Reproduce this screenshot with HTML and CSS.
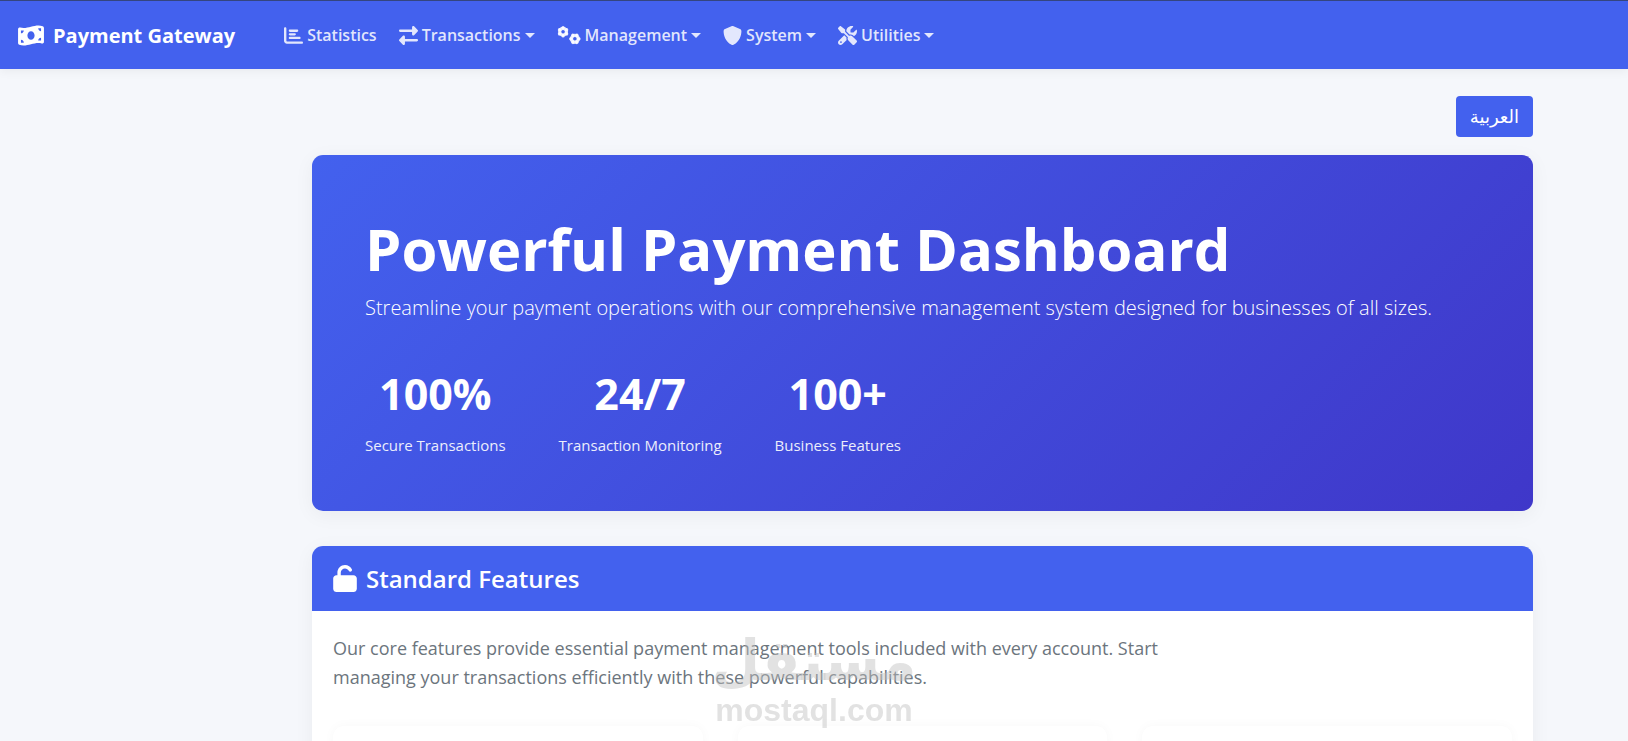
FILE: index.html
```html
<!DOCTYPE html>
<html lang="en">
<head>
    <meta charset="UTF-8">
    <meta name="viewport" content="width=device-width, initial-scale=1.0">
    <title>Payment Gateway</title>
    <link rel="stylesheet" href="styles.css">
</head>
<body>

<nav class="navbar">
    <a class="brand" href="#">
        <svg class="icon brand-icon" viewBox="0 0 576 512"><path fill-rule="evenodd" d="M0 112.500V422.300c0 18 10.100 35 27 41.300c87 32.500 174 10.300 261-11.900c79.800-20.300 159.600-40.700 239.300-18.900c23 6.300 48.700-9.500 48.700-33.400V89.700c0-18-10.100-35-27-41.300C462 15.900 375 38.100 288 60.300C208.200 80.600 128.400 100.900 48.700 79.100C25.600 72.800 0 88.600 0 112.500zM288 352c-44.200 0-80-43-80-96s35.800-96 80-96s80 43 80 96s-35.800 96-80 96zM64 352c35.300 0 64 28.700 64 64H64V352zm64-208c0 35.300-28.700 64-64 64V144h64zM512 304v64H448c0-35.300 28.700-64 64-64zM448 96h64v64c-35.300 0-64-28.700-64-64z"/></svg>
        Payment Gateway
    </a>
    <ul class="nav-list">
        <li>
            <a class="nav-link" href="#">
                <svg class="icon" viewBox="0 0 512 512"><path d="M32 32c17.700 0 32 14.300 32 32V400c0 8.800 7.200 16 16 16H480c17.700 0 32 14.300 32 32s-14.300 32-32 32H80c-44.200 0-80-35.800-80-80V64C0 46.300 14.300 32 32 32zm96 96c0-17.700 14.300-32 32-32l192 0c17.700 0 32 14.300 32 32s-14.300 32-32 32l-192 0c-17.700 0-32-14.300-32-32zm32 64H288c17.700 0 32 14.300 32 32s-14.300 32-32 32H160c-17.700 0-32-14.300-32-32s14.300-32 32-32zm0 96H416c17.700 0 32 14.300 32 32s-14.300 32-32 32H160c-17.700 0-32-14.300-32-32s14.300-32 32-32z"/></svg>
                Statistics
            </a>
        </li>
        <li>
            <a class="nav-link dropdown" href="#">
                <svg class="icon" viewBox="0 0 512 512"><path d="M32 96l320 0V32c0-12.900 7.800-24.600 19.800-29.600s25.700-2.200 34.900 6.900l96 96c6 6 9.400 14.100 9.400 22.600s-3.400 16.600-9.400 22.600l-96 96c-9.200 9.200-22.900 11.900-34.900 6.900s-19.800-16.600-19.800-29.600V160L32 160c-17.700 0-32-14.300-32-32s14.300-32 32-32zM480 352c17.700 0 32 14.300 32 32s-14.300 32-32 32H160v64c0 12.900-7.800 24.600-19.800 29.600s-25.700 2.200-34.900-6.900l-96-96c-6-6-9.400-14.100-9.400-22.600s3.400-16.600 9.400-22.600l96-96c9.200-9.200 22.900-11.900 34.900-6.900s19.800 16.600 19.800 29.600l0 64H480z"/></svg>
                Transactions
            </a>
        </li>
        <li>
            <a class="nav-link dropdown" href="#">
                <svg class="icon icon-wide" viewBox="0 0 640 512">
                    <g fill="none" stroke="currentColor">
                        <circle cx="160" cy="156" r="92" stroke-width="88"/>
                        <path stroke-width="84" stroke-linecap="round" d="M160 60V42M160 252V270M77 108L61 99M243 204L259 213M77 204L61 213M243 108L259 99"/>
                        <circle cx="478" cy="346" r="92" stroke-width="88"/>
                        <path stroke-width="84" stroke-linecap="round" d="M382 346H364M574 346H592M430 263L421 247M526 429L535 445M526 263L535 247M430 429L421 445"/>
                    </g>
                </svg>
                Management
            </a>
        </li>
        <li>
            <a class="nav-link dropdown" href="#">
                <svg class="icon" viewBox="0 0 512 512"><path d="M269.400 2.900C265.200 1 260.700 0 256 0s-9.200 1-13.400 2.900L54.300 82.800c-22 9.300-38.400 31-38.300 57.200c.5 99.200 41.300 280.700 213.600 363.200c16.700 8 36.100 8 52.800 0C454.700 420.700 495.500 239.200 496 140c.1-26.200-16.300-47.900-38.300-57.200L269.400 2.900z"/></svg>
                System
            </a>
        </li>
        <li>
            <a class="nav-link dropdown" href="#">
                <svg class="icon" viewBox="0 0 512 512"><path d="M78.600 5C69.100-2.400 55.600-1.500 47 7L7 47c-8.500 8.500-9.400 22-2.100 31.600l80 104c4.500 5.900 11.600 9.400 19 9.400h54.100l109 109c-14.700 29-10 65.400 14.300 89.600l112 112c12.500 12.500 32.800 12.500 45.300 0l64-64c12.500-12.500 12.500-32.800 0-45.300l-112-112c-24.200-24.200-60.600-29-89.600-14.300l-109-109V104c0-7.500-3.500-14.500-9.400-19L78.600 5zM19.900 396.100C7.200 408.800 0 426.100 0 444.100C0 481.600 30.400 512 67.900 512c18 0 35.300-7.200 48-19.900L233.700 374.300c-7.800-20.900-9-43.600-3.600-65.100l-61.700-61.700L19.900 396.100zM512 144c0-10.500-1.100-20.700-3.200-30.500c-2.400-11.200-16.100-14.100-24.200-6l-63.900 63.900c-3 3-7.100 4.700-11.300 4.700H352c-8.800 0-16-7.200-16-16V102.600c0-4.200 1.700-8.300 4.700-11.300l63.900-63.900c8.100-8.100 5.200-21.800-6-24.200C388.700 1.100 378.500 0 368 0C288.500 0 224 64.500 224 144l0 .8 85.300 85.300c36-9.100 75.800 .5 104 28.700L429 274.500c49-23 83-72.800 83-130.500zM56 432a24 24 0 1 1 48 0 24 24 0 1 1 -48 0z"/></svg>
                Utilities
            </a>
        </li>
    </ul>
</nav>

<main class="content">

<div class="language">
    <button class="language-btn" type="button" lang="ar">العربية</button>
</div>

<section class="hero">
    <h1>Powerful Payment Dashboard</h1>
    <p class="lead">Streamline your payment operations with our comprehensive management system designed for businesses of all sizes.</p>
    <div class="stats">
        <div class="stat">
            <div class="stat-value">100%</div>
            <div class="stat-label">Secure Transactions</div>
        </div>
        <div class="stat">
            <div class="stat-value">24/7</div>
            <div class="stat-label">Transaction Monitoring</div>
        </div>
        <div class="stat">
            <div class="stat-value">100+</div>
            <div class="stat-label">Business Features</div>
        </div>
    </div>
</section>

<section class="features">
    <h2 class="features-header">
        <svg class="icon lock-icon" viewBox="0 0 448 512"><path d="M144 144c0-44.200 35.800-80 80-80c31.900 0 59.400 18.600 72.300 45.700c7.600 16 26.700 22.800 42.600 15.200s22.800-26.700 15.200-42.600C331 33.700 281.500 0 224 0C144.500 0 80 64.500 80 144v48H64c-35.300 0-64 28.700-64 64V448c0 35.300 28.700 64 64 64H384c35.300 0 64-28.700 64-64V256c0-35.300-28.700-64-64-64H144V144z"/></svg>
        Standard Features
    </h2>
    <div class="features-body">
        <p class="features-text">Our core features provide essential payment management tools included with every account. Start managing your transactions efficiently with these powerful capabilities.</p>
        <div class="feature-grid">
            <div class="feature-card"></div>
            <div class="feature-card"></div>
            <div class="feature-card"></div>
        </div>
    </div>
</section>

</main>

<div class="watermark">
    <span class="watermark-ar" lang="ar">مستقل</span>
    <span class="watermark-en">mostaql.com</span>
</div>

</body>
</html>
```
FILE: styles.css
```css
*{
    box-sizing: border-box;
}

body{
    margin: 0;
    height: 100vh;
    overflow: hidden;
    background-color: #f5f7fb;
    font-family: "Open Sans", "Noto Sans", "DejaVu Sans", sans-serif;
}

.navbar{
    display: flex;
    align-items: center;
    gap: 49px;
    height: 69px;
    padding: 0 18px;
    border-top: 1px solid #34457f;
    background-color: #4361ee;
    box-shadow: 0 2px 10px rgba(0, 0, 0, 0.06);
}

.icon{
    flex: none;
    width: 19px;
    height: 19px;
    fill: currentColor;
}

.brand{
    display: flex;
    align-items: center;
    gap: 9px;
    color: white;
    font-size: 20px;
    font-weight: 700;
    text-decoration: none;
}

.brand-icon{
    width: 26px;
    height: 23px;
}

.nav-list{
    display: flex;
    gap: 22px;
    margin: 0;
    padding: 0;
    list-style: none;
}

.nav-link{
    display: flex;
    align-items: center;
    gap: 4px;
    color: rgba(255, 255, 255, 0.85);
    font-size: 16px;
    font-weight: 600;
    text-decoration: none;
}

.icon-wide{
    width: 24px;
}

.dropdown::after{
    content: '';
    border-top: 5px solid;
    border-left: 5px solid transparent;
    border-right: 5px solid transparent;
}

.content{
    padding: 27px 95px 0 312px;
}

.language{
    display: flex;
    justify-content: flex-end;
    margin-bottom: 18px;
}

.language-btn{
    height: 41px;
    padding: 0 14px;
    border: none;
    border-radius: 4px;
    background-color: #4361ee;
    color: white;
    font-family: "DejaVu Sans", sans-serif;
    font-size: 18px;
}

.hero{
    padding: 53px;
    border-radius: 11px;
    background-image: linear-gradient(135deg, #4361ee, #3f37c9);
    box-shadow: 0 4px 20px rgba(0, 0, 0, 0.05);
    color: white;
}

.hero h1{
    margin: 0;
    font-size: 58px;
    font-weight: 700;
    line-height: 82px;
}

.lead{
    margin: 0 0 38px;
    font-size: 20px;
    font-weight: 300;
    line-height: 36px;
}

.stats{
    display: flex;
    gap: 53px;
}

.stat{
    text-align: center;
}

.stat-value{
    font-size: 43px;
    font-weight: 700;
    line-height: 60px;
}

.stat-label{
    margin-top: 9px;
    font-size: 15px;
    line-height: 25px;
    opacity: 0.9;
}

.features{
    margin-top: 35px;
    border-radius: 11px;
    overflow: hidden;
    background-color: white;
    box-shadow: 0 4px 20px rgba(0, 0, 0, 0.05);
}

.features-header{
    display: flex;
    align-items: center;
    gap: 9px;
    height: 65px;
    margin: 0;
    padding: 0 21px;
    background-color: #4361ee;
    color: white;
    font-size: 24px;
    font-weight: 600;
}

.lock-icon{
    width: 24px;
    height: 27px;
}

.features-body{
    padding: 23px 21px 21px;
}

.features-text{
    max-width: 853px;
    margin: 0 0 34px;
    color: #6c757d;
    font-size: 18px;
    line-height: 29px;
}

.feature-grid{
    display: grid;
    grid-template-columns: repeat(3, 1fr);
    gap: 35px;
}

.feature-card{
    height: 200px;
    border-radius: 11px;
    background-color: white;
    box-shadow: 0 0 12px rgba(0, 0, 0, 0.03);
}

/* site stamp laid over the page */
.watermark{
    position: fixed;
    bottom: 12px;
    left: 50%;
    transform: translateX(-50%);
    display: flex;
    flex-direction: column;
    align-items: center;
    color: rgba(190, 190, 190, 0.45);
    font-weight: 700;
    pointer-events: none;
}

.watermark-ar{
    font-family: "DejaVu Sans", sans-serif;
    font-size: 56px;
    line-height: 60px;
}

.watermark-en{
    font-family: "Liberation Sans", sans-serif;
    font-size: 32px;
    line-height: 38px;
}
```
